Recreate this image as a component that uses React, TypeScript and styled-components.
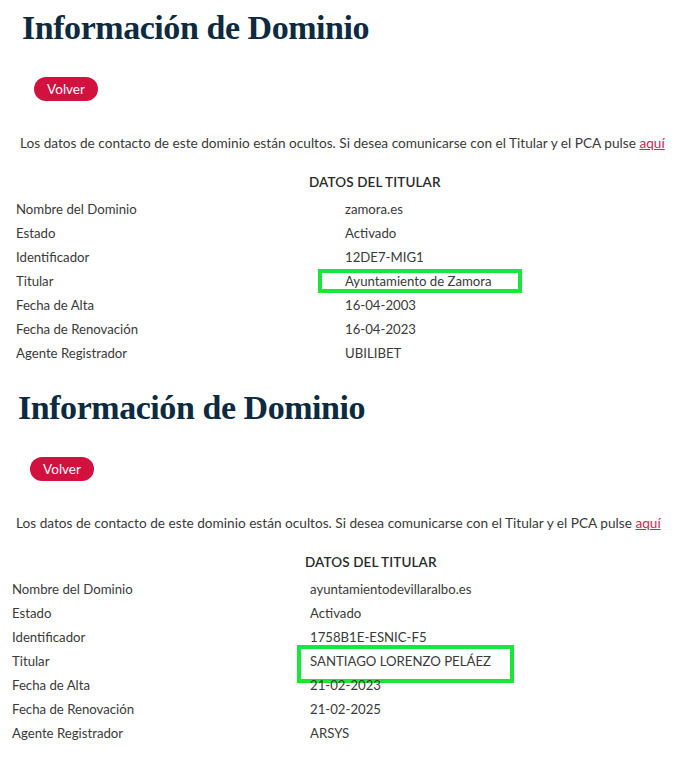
import React from 'react';
import { styled, createGlobalStyle } from 'styled-components';

const GlobalStyle = createGlobalStyle`
  html, body {
    margin: 0;
    padding: 0;
    background: #ffffff;
  }
  body {
    font-family: Lato, "Noto Sans", sans-serif;
    color: #3a3a3a;
  }
`;

const Page = styled.div`
  width: 674px;
`;

const Section = styled.section<{ $left: number; $top: number }>`
  padding: ${(p) => p.$top}px 0 0 ${(p) => p.$left}px;
  display: flex;
  flex-direction: column;
  align-items: flex-start;
`;

const Title = styled.h1`
  margin: 0 0 0 6px;
  font-family: "Liberation Serif", "DejaVu Serif", serif;
  font-weight: 700;
  font-size: 34px;
  line-height: 40px;
  letter-spacing: -0.45px;
  color: #0c2a40;
`;

const BackButton = styled.button`
  margin: 29px 0 0 18px;
  width: 64px;
  height: 24px;
  border: none;
  border-radius: 12px;
  background: #d3113f;
  color: #ffffff;
  font-family: Lato, "Noto Sans", sans-serif;
  font-size: 13.5px;
  padding: 0;
`;

const Note = styled.p`
  margin: 32px 0 0 4px;
  font-size: 13.65px;
  line-height: 20px;
  white-space: nowrap;
  a {
    color: #d42453;
    text-decoration: underline;
  }
`;

const TableHeader = styled.div`
  margin: 19px 0 0 293px;
  font-size: 13.5px;
  line-height: 20px;
  font-weight: 600;
  color: #2a2a2a;
  letter-spacing: 0.1px;
`;

const Table = styled.div<{ $labelWidth: number }>`
  margin-top: 5px;
  display: grid;
  grid-template-columns: ${(p) => p.$labelWidth}px auto;
  grid-auto-rows: 24px;
  font-size: 13.2px;
  line-height: 24px;
`;

const Label = styled.div``;

const Value = styled.div<{ $mark?: { x: number; y: number; w: number; h: number } }>`
  position: relative;
  white-space: nowrap;
  &::after {
    content: '';
    display: ${(p) => (p.$mark ? 'block' : 'none')};
    position: absolute;
    left: ${(p) => p.$mark?.x ?? 0}px;
    top: ${(p) => p.$mark?.y ?? 0}px;
    width: ${(p) => p.$mark?.w ?? 0}px;
    height: ${(p) => p.$mark?.h ?? 0}px;
    border: 4px solid #18e63a;
    box-sizing: border-box;
  }
`;

type Row = [string, string];

type Mark = { x: number; y: number; w: number; h: number };

const DomainInfo = ({
  left,
  top,
  labelWidth,
  rows,
  mark,
}: {
  left: number;
  top: number;
  labelWidth: number;
  rows: Row[];
  mark: Mark;
}) => (
  <Section $left={left} $top={top}>
    <Title>Información de Dominio</Title>
    <BackButton>Volver</BackButton>
    <Note>
      Los datos de contacto de este dominio están ocultos. Si desea comunicarse con el Titular y el PCA pulse{' '}
      <a href="#">aquí</a>
    </Note>
    <TableHeader>DATOS DEL TITULAR</TableHeader>
    <Table $labelWidth={labelWidth}>
      {rows.map(([label, value]) => (
        <React.Fragment key={label}>
          <Label>{label}</Label>
          <Value $mark={label === 'Titular' ? mark : undefined}>{value}</Value>
        </React.Fragment>
      ))}
    </Table>
  </Section>
);

const first: Row[] = [
  ['Nombre del Dominio', 'zamora.es'],
  ['Estado', 'Activado'],
  ['Identificador', '12DE7-MIG1'],
  ['Titular', 'Ayuntamiento de Zamora'],
  ['Fecha de Alta', '16-04-2003'],
  ['Fecha de Renovación', '16-04-2023'],
  ['Agente Registrador', 'UBILIBET'],
];

const second: Row[] = [
  ['Nombre del Dominio', 'ayuntamientodevillaralbo.es'],
  ['Estado', 'Activado'],
  ['Identificador', '1758B1E-ESNIC-F5'],
  ['Titular', 'SANTIAGO LORENZO PELÁEZ'],
  ['Fecha de Alta', '21-02-2023'],
  ['Fecha de Renovación', '21-02-2025'],
  ['Agente Registrador', 'ARSYS'],
];

const App = () => {
  return (
    <Page>
      <GlobalStyle />
      <DomainInfo left={16} top={8} labelWidth={329} rows={first} mark={{ x: -27, y: 0, w: 204, h: 24 }} />
      <DomainInfo left={12} top={23} labelWidth={298} rows={second} mark={{ x: -13, y: -4, w: 217, h: 38 }} />
    </Page>
  );
};

export default App;
